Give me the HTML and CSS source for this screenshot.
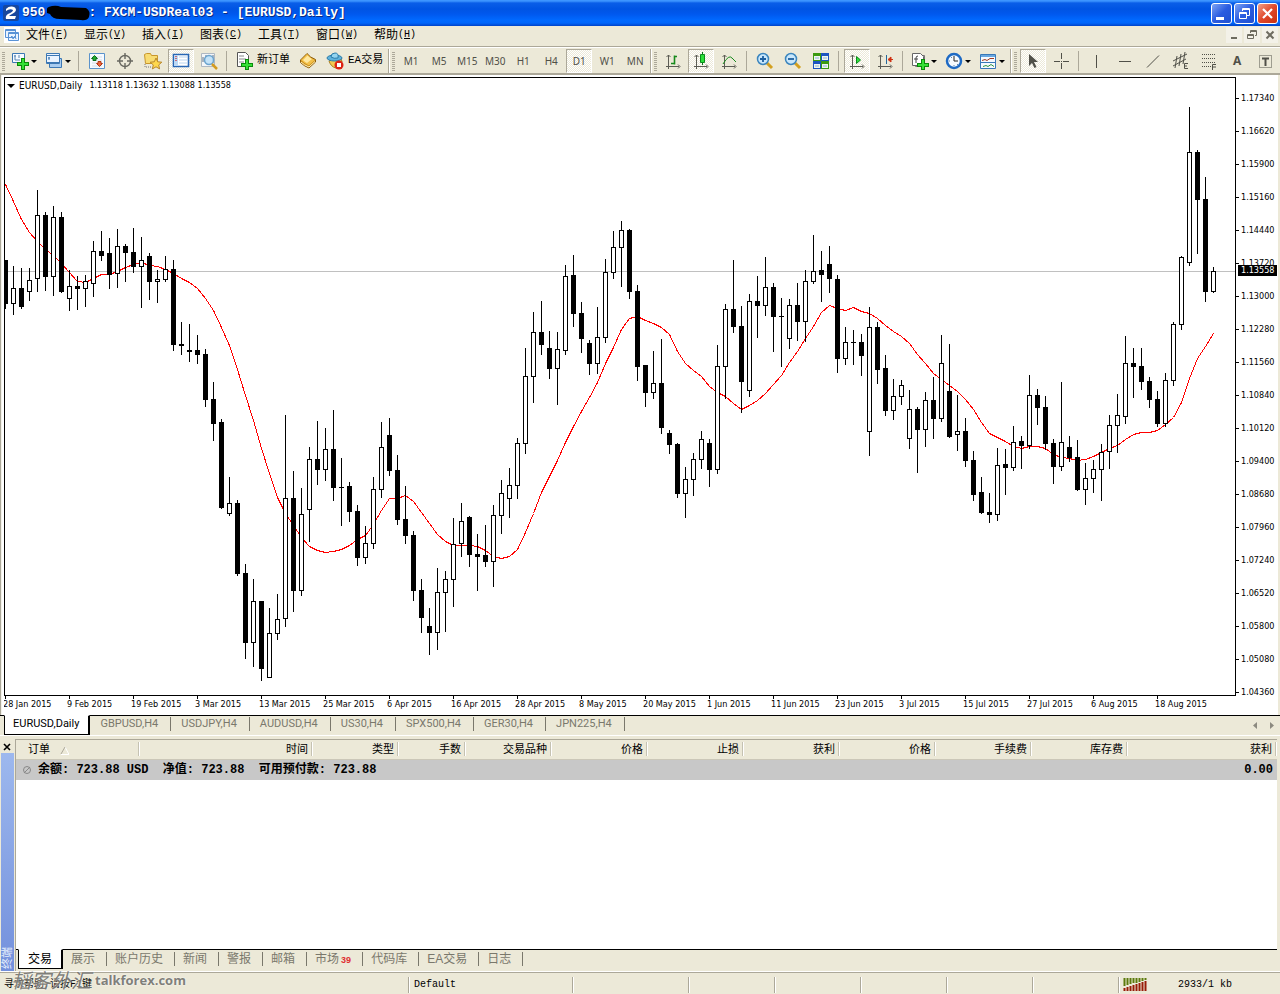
FILE: index.html
```html
<!DOCTYPE html>
<html lang="zh-CN">
<head>
<meta charset="utf-8">
<title>FXCM-USDReal03 - [EURUSD,Daily]</title>
<link rel="stylesheet" href="styles.css">
</head>
<body>
<header class="titlebar">
  <svg class="logo" width="16" height="16" viewBox="0 0 16 16"><rect width="16" height="16" rx="2" fill="#17479e"/><path d="M3 4Q7 0 12 2.500Q15 6 9 9Q7 10 6 11H13L12 14H3Q2 11 5 9Q10 7 10 5Q7 3 3 6Z" fill="#fff"/></svg>
  <h1 class="title">950<svg class="redact" width="46" height="16" viewBox="0 0 46 16"><path d="M2 5Q1 2 7 1Q12 0 16 2L41 3Q46 6 44 12Q42 16 36 15L15 14Q7 14 5 9L2 8Z"/></svg>: FXCM-USDReal03 - [EURUSD,Daily]</h1>
  <div class="win-buttons">
    <button class="win" aria-label="最小化"><svg width="19" height="19"><path d="M4 13h8v3h-8z" fill="#fff"/></svg></button>
    <button class="win" aria-label="还原"><svg width="19" height="19" fill="none" stroke="#fff"><path d="M7.500 7V4.500h7v7H12M7 5.500h8M4.500 8.500h7v6h-7zM4 9.500h8"/></svg></button>
    <button class="win win-close" aria-label="关闭"><svg width="19" height="19"><path d="M5 5l9 9M14 5l-9 9" stroke="#fff" stroke-width="2.200"/></svg></button>
  </div>
</header>

<nav class="menubar">
  <svg class="menu-icon" width="16" height="16" fill="none" stroke="#5a93d6"><rect width="16" height="16" fill="#fff" stroke="none"/><path d="M1.500 2.500h10v8h-10zM4.500 5.500h10v8h-10z" fill="#eaf4ff"/><path d="M1 3.500h11M4 6.500h11M6 11l2-2 1 3 2-3 1 3"/></svg>
  <button class="menu">文件<span>(<u>F</u>)</span></button>
  <button class="menu">显示<span>(<u>V</u>)</span></button>
  <button class="menu">插入<span>(<u>I</u>)</span></button>
  <button class="menu">图表<span>(<u>C</u>)</span></button>
  <button class="menu">工具<span>(<u>T</u>)</span></button>
  <button class="menu">窗口<span>(<u>W</u>)</span></button>
  <button class="menu">帮助<span>(<u>H</u>)</span></button>
  <div class="mdi-buttons">
    <button class="mdi" aria-label="最小化图表"><svg width="16" height="16"><path d="M5 10h6v2h-6z" fill="#6e6c60"/></svg></button>
    <button class="mdi" aria-label="还原图表"><svg width="16" height="16" fill="none" stroke="#6e6c60"><path d="M6.500 6V3.500h6v5H11M6 4.500h7M3.500 7.500h6v4h-6zM3 8.500h7"/></svg></button>
    <button class="mdi" aria-label="关闭图表"><svg width="16" height="16"><path d="M4.500 4.500l7 7M11.500 4.500l-7 7" stroke="#6e6c60" stroke-width="2"/></svg></button>
  </div>
</nav>

<div class="toolbar">
  <div class="group">
    <button class="tool menu-tool" aria-label="新图表"><svg width="18" height="18"><path d="M1.500 1.500h12v9h-12z" fill="#f5faff" stroke="#3c78b4"/><path d="M4 3v5M3 4h2M8 3v3M4 8h5" stroke="#5a87b4"/><path d="M10 6h4v4h4v4h-4v4h-4v-4H6v-4h4z" fill="#0b8a0b"/><path d="M11 7h2v4h4v2h-4v4h-2v-4H7v-2h4z" fill="#35e035"/></svg><i class="caret"></i></button>
    <button class="tool menu-tool" aria-label="配置文件"><svg width="18" height="18" stroke="#3c78b4"><path d="M4.500 6.500h12v9h-12z" fill="#a9cdf0"/><path d="M1.500 1.500h13v10h-13z" fill="#eaf4ff"/><path d="M1 3.500h13M1 10.500h13M4 5v3M3 6h2" fill="none"/></svg><i class="caret"></i></button>
    <i class="sep"></i>
    <button class="tool" aria-label="市场报价"><svg width="18" height="18"><path d="M1.500 1.500h15v15h-15z" fill="#f6faff" stroke="#5b93cb"/><path d="M4 5h10M4 8h10M4 11h10M4 14h10" stroke="#d5dde8"/><path d="M6.500 3.500l3 3H8v2H5v-2H3.500z" fill="#20a830" stroke="#0b701a"/><path d="M11.500 14.500l-3-3H10v-2h3v2h1.500z" fill="#f0663c" stroke="#b03a18"/></svg></button>
    <button class="tool" aria-label="数据窗口"><svg width="18" height="18" fill="none" stroke="#686860" stroke-width="1.400"><circle cx="9" cy="9" r="5.500"/><path d="M9 1v6M9 11v6M1 9h6M11 9h6"/></svg></button>
    <button class="tool" aria-label="导航"><svg width="20" height="18"><path d="M1.500 2.500l2-1h4l1 2h6v8h-12z" fill="#f8dc72" stroke="#c8962c"/><path d="M2 12v3h7" stroke="#777" fill="none" stroke-dasharray="1 1"/><path d="M13 6l1.700 3.800 4.100.4-3.100 2.700.9 4-3.600-2.100-3.600 2.100.9-4-3.100-2.700 4.100-.4z" fill="#ffd84c" stroke="#b8862c"/></svg></button>
    <button class="tool pressed" aria-label="终端"><svg width="18" height="18"><path d="M1.500 2.500h15v12h-15z" fill="#fff" stroke="#2867b5" stroke-width="1.600"/><path d="M2 3h4v11H2z" fill="#bcd9f5"/><path d="M4 4v1M4 6v1M4 8v1" stroke="#c00"/><path d="M7 5h8M7 8h8M7 11h8" stroke="#b9d4ef"/></svg></button>
    <button class="tool" aria-label="策略测试"><svg width="18" height="18"><path d="M1.500 1.500h13v13h-13z" fill="#f4f6f8" stroke="#aeb8c2"/><path d="M3 5v5M6 3v6M13 3v8" stroke="#607080"/><circle cx="9" cy="8" r="4.500" fill="#c4e3f8" stroke="#6da5cf" stroke-width="1.500"/><path d="M12 12l5 5" stroke="#d39b20" stroke-width="2.500"/></svg></button>
    <i class="sep"></i>
    <button class="tool text-tool"><svg width="18" height="18"><path d="M2.500.5h8l3 3v11h-11z" fill="#fff" stroke="#555"/><path d="M4 4h5M4 7h7M4 10h5" stroke="#888"/><path d="M10 7h4v4h4v4h-4v3h-4v-3H6v-4h4z" fill="#0b8a0b"/><path d="M11 8h2v4h4v2h-4v3h-2v-3H7v-2h4z" fill="#35e035"/></svg><span>新订单</span></button>
    <button class="tool" aria-label="MetaEditor"><svg width="18" height="18"><path d="M1.500 8l6.500-6.500q3 4 8.500 6v2.500L10 16q-5-2-8.500-5.500z" fill="#c98a14" stroke="#8d5e0e"/><path d="M2 8l6-6q3 4 8 6l-6 5.500q-5-2-8-5.500z" fill="#f2c04a"/><path d="M4 8l4.500-4.500q2 2 4.500 3.500l-5 4q-2-1-4-3z" fill="#ffe9a0"/><path d="M2 10q3 3 8 5l6-5.500" stroke="#fff3be" fill="none"/></svg></button>
    <button class="tool text-tool"><svg width="18" height="18"><path d="M3 9l4-3h8l1 4-6 6q-5-1-7-7z" fill="#f3ca50" stroke="#a97f20"/><ellipse cx="8.500" cy="6" rx="7.500" ry="3" fill="#5fb2dc" stroke="#2b7ca9"/><path d="M5 5q0-4 4-4t3 5q-4 1-7-1z" fill="#93d4f0" stroke="#2b7ca9"/><circle cx="13" cy="13" r="4.500" fill="#dc2414"/><path d="M11 11h4v4h-4z" fill="#fff"/></svg><span>EA交易</span></button>
  </div>
  <div class="group">
    <button class="tool">M1</button><button class="tool">M5</button><button class="tool">M15</button><button class="tool">M30</button><button class="tool">H1</button><button class="tool">H4</button><button class="tool pressed">D1</button><button class="tool">W1</button><button class="tool">MN</button>
  </div>
  <div class="group">
    <button class="tool" aria-label="柱状图"><svg width="18" height="18" fill="none" stroke="#5c5c54"><path d="M4.500 3v14M2 14.500h13M2.500 5l2-2 2 2M14 12.500l2 2-2 2"/><path d="M10.500 12.500v-9M10 4.500h3M7 11.500h3" stroke="#178a1c" stroke-width="1.600"/></svg></button>
    <button class="tool pressed" aria-label="阴阳烛"><svg width="18" height="18" fill="none" stroke="#5c5c54"><path d="M4.500 3v14M2 14.500h13M2.500 5l2-2 2 2M14 12.500l2 2-2 2"/><path d="M10.500 0v13" stroke="#0b701a"/><path d="M8.500 2.500h4v8h-4z" fill="#2be03a" stroke="#0b8a1a"/></svg></button>
    <button class="tool" aria-label="折线图"><svg width="18" height="18" fill="none" stroke="#5c5c54"><path d="M4.500 3v14M2 14.500h13M2.500 5l2-2 2 2M14 12.500l2 2-2 2"/><path d="M3 12q6-10 9-6l4 4" stroke="#178a1c"/></svg></button>
    <i class="sep"></i>
    <button class="tool" aria-label="放大"><svg width="18" height="18"><path d="M11 11l5 5" stroke="#d3a020" stroke-width="3"/><circle cx="7" cy="7" r="5.500" fill="#c9e7fb" stroke="#3b85bd" stroke-width="1.500"/><path d="M4 7h6M7 4v6" stroke="#1c5fa0" stroke-width="1.800"/></svg></button>
    <button class="tool" aria-label="缩小"><svg width="18" height="18"><path d="M11 11l5 5" stroke="#d3a020" stroke-width="3"/><circle cx="7" cy="7" r="5.500" fill="#c9e7fb" stroke="#3b85bd" stroke-width="1.500"/><path d="M4 7h6" stroke="#1c5fa0" stroke-width="1.800"/></svg></button>
    <button class="tool" aria-label="平铺"><svg width="18" height="18"><path d="M1 1h8v8H1zM9 9h8v8H9z" fill="#3c9a10"/><path d="M9 1h8v8H9zM1 9h8v8H1z" fill="#1c54c0"/><path d="M2 4h6v4H2zM10 4h6v4h-6zM2 12h6v4H2zM10 12h6v4h-6z" fill="#eef5ee"/><path d="M3 6h4M11 6h4M3 14h4M11 14h4" stroke="#8eb2d8"/></svg></button>
    <i class="sep"></i>
    <button class="tool pressed" aria-label="自动滚动"><svg width="18" height="18" fill="none" stroke="#5c5c54"><path d="M4.500 3v14M2 14.500h13M2.500 5l2-2 2 2M14 12.500l2 2-2 2"/><path d="M8.500 4.500v7l4-3.500z" fill="#2be03a" stroke="#0b8a1a"/></svg></button>
    <button class="tool" aria-label="图表平移"><svg width="18" height="18" fill="none" stroke="#5c5c54"><path d="M4.500 3v14M2 14.500h13M2.500 5l2-2 2 2M14 12.500l2 2-2 2"/><path d="M10.500 3v9" stroke="#24689c"/><path d="M17 7.500h-4M15 5l-3 2.500 3 2.500z" fill="#d03010" stroke="#d03010"/></svg></button>
    <i class="sep"></i>
    <button class="tool menu-tool" aria-label="指标"><svg width="18" height="18"><path d="M4.500 3.500h9v11h-9z" fill="#ddd" stroke="#777"/><path d="M1.500 1.500h8l3 3v9h-11z" fill="#fff" stroke="#666"/><path d="M7 4q-2 0-2 2v5M3 7h4" stroke="#444" fill="none"/><path d="M10 7h4v4h4v4h-4v3h-4v-3H6v-4h4z" fill="#0b8a0b"/><path d="M11 8h2v4h4v2h-4v3h-2v-3H7v-2h4z" fill="#35e035"/></svg><i class="caret"></i></button>
    <button class="tool menu-tool" aria-label="周期"><svg width="18" height="18"><circle cx="9" cy="9" r="7" fill="#f5faff" stroke="#1e6ac4" stroke-width="2.500"/><path d="M9 4v5h4" fill="none" stroke="#222"/><path d="M4 9h1M9 13v1M6 5l1 1M12 12l1 1" stroke="#68a"/></svg><i class="caret"></i></button>
    <button class="tool menu-tool" aria-label="模板"><svg width="18" height="18"><path d="M1.500 2.500h15v14h-15z" fill="#f6faff" stroke="#3878b8"/><path d="M2 3h14v2H2z" fill="#68a7e0"/><path d="M2 10.500h14" stroke="#3878b8"/><path d="M3 8.500l3-1 2 1 3-2 4 0" stroke="#a03820" fill="none"/><path d="M4 14.500l3-1 2 1 3-2 3 2" stroke="#2c9440" fill="none"/></svg><i class="caret"></i></button>
  </div>
  <div class="group">
    <button class="tool pressed" aria-label="光标"><svg width="18" height="18"><path d="M5 2v12l3-3 2.500 5 2-1-2.500-5h4z" fill="#505048"/></svg></button>
    <button class="tool" aria-label="十字光标"><svg width="18" height="18" stroke="#505048"><path d="M9.500 1v6M9.500 11v6M2 9.500h6M11 9.500h6M9 9.500h1"/></svg></button>
    <i class="sep"></i>
    <button class="tool" aria-label="垂直线"><svg width="18" height="18" stroke="#505048"><path d="M8.500 3v13"/></svg></button>
    <button class="tool" aria-label="水平线"><svg width="18" height="18" stroke="#505048"><path d="M3 9.500h12"/></svg></button>
    <button class="tool" aria-label="趋势线"><svg width="18" height="18" stroke="#505048"><path d="M3 15.500L15 3.500"/></svg></button>
    <button class="tool" aria-label="等距通道"><svg width="18" height="18" stroke="#505048"><path d="M1 9L15 2M1 14L14 7M5 4L3 16M9 2L7 14M13 0L11 12"/><path d="M16 11.500h-3.500v5H16M12 14h3" fill="none"/></svg></button>
    <button class="tool" aria-label="斐波纳契"><svg width="18" height="18" stroke="#505048"><path d="M2 2.500h14M2 6.500h14M2 10.500h14M2 14.500h9" stroke-dasharray="1 1"/><path d="M16 12.500h-3.500V18M13 15h3" fill="none"/></svg></button>
    <button class="tool glyph" aria-label="文字">A</button>
    <button class="tool" aria-label="文字标签"><svg width="18" height="18" fill="none" stroke="#505048"><path d="M3.500 3.500h12v12h-12z" stroke-dasharray="1 1"/><path d="M6 6.500h7M9.500 6v8" stroke-width="2"/></svg></button>
  </div>
</div>

<main class="chart">
  <div class="plot">
    <p class="ohlc"><i class="caret"></i><b>EURUSD,Daily</b><span>1.13118 1.13632 1.13088 1.13558</span></p>
    <svg class="candles" id="candles" role="img" aria-label="EURUSD Daily"></svg>
  </div>
  <div class="price-axis">
    <ol class="prices">
      <li>1.17340</li><li>1.16620</li><li>1.15900</li><li>1.15160</li><li>1.14440</li><li>1.13720</li><li>1.13000</li><li>1.12280</li><li>1.11560</li><li>1.10840</li><li>1.10120</li><li>1.09400</li><li>1.08680</li><li>1.07960</li><li>1.07240</li><li>1.06520</li><li>1.05800</li><li>1.05080</li><li>1.04360</li>
    </ol>
    <span class="last-price">1.13558</span>
  </div>
  <ol class="dates">
    <li>28 Jan 2015</li><li>9 Feb 2015</li><li>19 Feb 2015</li><li>3 Mar 2015</li><li>13 Mar 2015</li><li>25 Mar 2015</li><li>6 Apr 2015</li><li>16 Apr 2015</li><li>28 Apr 2015</li><li>8 May 2015</li><li>20 May 2015</li><li>1 Jun 2015</li><li>11 Jun 2015</li><li>23 Jun 2015</li><li>3 Jul 2015</li><li>15 Jul 2015</li><li>27 Jul 2015</li><li>6 Aug 2015</li><li>18 Aug 2015</li>
  </ol>
</main>

<nav class="sheets">
  <button class="sheet current">EURUSD,Daily</button><button class="sheet">GBPUSD,H4</button><button class="sheet">USDJPY,H4</button><button class="sheet">AUDUSD,H4</button><button class="sheet">US30,H4</button><button class="sheet">SPX500,H4</button><button class="sheet">GER30,H4</button><button class="sheet">JPN225,H4</button>
  <svg class="sheet-arrows" width="26" height="10" fill="#8c8a80"><path d="M6 1v7L2 4.500zM19 1v7l4-3.500z"/></svg>
</nav>

<section class="terminal">
  <aside class="rail">
    <button class="rail-close" aria-label="关闭终端"><svg width="8" height="8"><path d="M1 1l6 6M7 1l-6 6" stroke="#000" stroke-width="1.600"/></svg></button>
    <div class="rail-name"><span>终端</span></div>
  </aside>
  <div class="terminal-body">
    <div class="orders-wrap">
      <table class="orders">
        <colgroup><col class="c-order"><col class="c-time"><col class="c-type"><col class="c-lots"><col class="c-type"><col class="c-num"><col class="c-num"><col class="c-num"><col class="c-num"><col class="c-num"><col class="c-num"><col></colgroup>
        <thead><tr><th>订单 <svg width="9" height="9"><path d="M1 8.500h8L5 1" fill="none" stroke="#fff"/><path d="M1 8L5 1" stroke="#aca899"/></svg></th><th>时间</th><th>类型</th><th>手数</th><th>交易品种</th><th>价格</th><th>止损</th><th>获利</th><th>价格</th><th>手续费</th><th>库存费</th><th>获利</th></tr></thead>
        <tbody><tr><td colspan="11"><svg width="10" height="10" fill="none" stroke="#888"><circle cx="5" cy="5" r="3.500"/><path d="M2 8l6-6"/></svg>余额: 723.88 USD&nbsp; 净值: 723.88&nbsp; 可用预付款: 723.88</td><td>0.00</td></tr></tbody>
      </table>
    </div>
    <nav class="tabs">
      <button class="tab current">交易</button><button class="tab">展示</button><button class="tab">账户历史</button><button class="tab">新闻</button><button class="tab">警报</button><button class="tab">邮箱</button><button class="tab">市场<b class="count">39</b></button><button class="tab">代码库</button><button class="tab">EA交易</button><button class="tab">日志</button>
    </nav>
  </div>
</section>

<footer class="status">
  <span class="cell help">寻求帮助,请按F1键</span>
  <span class="cell profile">Default</span>
  <span class="cell wide"></span><span class="cell"></span><span class="cell"></span><span class="cell"></span><span class="cell"></span><span class="cell"></span>
  <span class="cell traffic"><svg width="24" height="13"><path d="M1.500 0v8M4.500 0v7M7.500 0v6M10.500 0v5M13.500 0v5M16.500 0v4M19.500 0v3M22.500 0v2" stroke="#5c7a0c" stroke-width="2"/><path d="M1.500 10v3M4.500 9v4M7.500 8v5M10.500 7v6M13.500 6v7M16.500 5v8M19.500 4v9M22.500 3v10" stroke="#981c08" stroke-width="2"/></svg>2933/1 kb</span>
  <div class="watermark"><span>韬客外汇</span>talkforex.com</div>
</footer>
<script src="chart.js"></script>
</body>
</html>
```

FILE: styles.css
```css
* { box-sizing: border-box; }
body {
  margin: 0;
  min-height: 100vh;
  display: flex;
  flex-direction: column;
  background: #ece9d8;
  color: #000;
  font: 12px/14px "Liberation Sans", "Noto Sans CJK SC", sans-serif;
  overflow-x: hidden;
}
button { margin: 0; padding: 0; border: 0; background: none; font: inherit; color: inherit; }
ol { margin: 0; padding: 0; list-style: none; }
svg { display: block; flex: none; }

.titlebar {
  display: flex;
  align-items: center;
  height: 26px;
  padding: 0 2px 0 3px;
  background: linear-gradient(#3d95ff 0, #3d95ff 1px, #0a5ee8 3px, #0054e3 9px, #0058ee 14px, #0069ff 20px, #0066fb 23px, #0042c8 26px);
}
.title {
  display: flex;
  align-items: center;
  flex: 1;
  margin: 0 0 0 3px;
  font: bold 13px/16px "Liberation Mono", monospace;
  color: #fff;
  text-shadow: 1px 1px #0a2a80;
  white-space: pre;
}
.redact { margin-right: -3px; }
.win-buttons { display: flex; gap: 2px; }
.win {
  width: 21px;
  height: 21px;
  padding: 0;
  border: 1px solid #fff;
  border-radius: 3px;
  background: linear-gradient(135deg, #7ea4f4, #2a5ce0 50%, #2050d0);
}
.win-close { background: linear-gradient(135deg, #f0a088, #e0482a 50%, #c83010); }

.menubar {
  display: flex;
  align-items: center;
  height: 20px;
  padding: 0 2px 2px 4px;
}
.menu-icon { margin-right: 6px; }
.menu {
  width: 58px;
  display: flex;
  align-items: center;
  font-size: 12px;
}
.menu span { font: 10px/12px "Liberation Mono", monospace; }
.mdi-buttons { display: flex; gap: 2px; margin-left: auto; }
.mdi { width: 16px; height: 16px; background: #f3f1e8; }

.toolbar {
  display: flex;
  height: 29px;
  padding-top: 2px;
  border-top: 1px solid #aca899;
  border-bottom: 2px solid #aca899;
  box-shadow: inset 0 1px #fff;
}
.group {
  display: flex;
  align-items: center;
  border-right: 1px solid #aca899;
  margin-right: 1px;
  padding-right: 1px;
  box-shadow: 1px 0 #fff;
}
.group:last-child { flex: 1; border: 0; box-shadow: none; margin: 0; padding: 0; }
.group::before {
  content: "";
  flex: none;
  width: 3px;
  height: 19px;
  margin: 0 2px;
  background: repeating-linear-gradient(#aca899 0, #aca899 1px, transparent 1px, transparent 2px);
}
.sep { flex: none; width: 1px; height: 20px; margin: 0 4px 0 3px; background: #aca899; }
.tool {
  flex: none;
  display: flex;
  align-items: center;
  justify-content: center;
  width: 28px;
  height: 24px;
  font: 10px/12px "Noto Sans", sans-serif;
  color: #505048;
}
.pressed {
  width: 26px;
  margin: 0 1px;
  border: 1px solid;
  border-color: #aca899 #fff #fff #aca899;
  background: repeating-conic-gradient(#fff 0 25%, #ece9d8 0 50%) 0 0 / 2px 2px;
}
.menu-tool { width: 34px; gap: 2px; }
.text-tool {
  width: auto;
  padding: 0 4px;
  gap: 4px;
  font: 11px/14px "Liberation Mono", "Noto Sans CJK SC", monospace;
  color: #000;
}
.text-tool span { padding-bottom: 2px; }
.glyph { font: bold 12px/14px "Noto Sans", sans-serif; }
.caret {
  flex: none;
  border: 3px solid transparent;
  border-top-color: #000;
  border-bottom-width: 0;
}

.chart {
  display: grid;
  grid-template-columns: 1fr 42px;
  margin-right: 2px;
  padding: 2px 0 0 4px;
  background: #fff;
  box-shadow: inset 1px 0 #aca899, inset 2px 0 #f4f2ea;
  font: 9px/11px "DejaVu Sans Condensed", "DejaVu Sans", sans-serif;
}
.plot { position: relative; border: 1px solid #000; }
.candles { width: 100%; height: 617px; }
.ohlc {
  position: absolute;
  top: 2px;
  left: 2px;
  display: flex;
  align-items: center;
  gap: 4px;
  margin: 0;
}
.ohlc b { font-size: 10px; font-weight: normal; margin-right: 3px; }
.ohlc .caret { border-width: 4px 4px 0; }
.price-axis { position: relative; padding-top: 5px; height: 619px; }
.prices li { height: 33px; display: flex; align-items: center; gap: 2px; }
.prices li::before { content: ""; width: 3px; height: 1px; background: #000; }
.last-price {
  position: absolute;
  left: 2px;
  right: 1px;
  top: 188px;
  padding-left: 3px;
  background: #000;
  color: #fff;
}
.dates { grid-column: 1 / -1; display: flex; height: 19px; overflow: hidden; }
.dates li { flex: none; width: 64px; white-space: nowrap; padding-top: 3px; margin-left: -1px; margin-right: 1px; }
.dates li::before { content: ""; display: block; width: 1px; height: 3px; margin: -3px 0 0 2px; background: #000; }

.sheets {
  display: flex;
  align-items: flex-start;
  height: 21px;
  padding-left: 4px;
  border-top: 1px solid #000;
  border-bottom: 1px solid #fff;
  font: 11px/14px Roboto, sans-serif;
  color: #7a786c;
}
.sheet { margin-top: 1px; padding: 0 12px 0 10px; border-right: 1px solid #7a786c; }
.sheet.current {
  margin: -1px 0 0;
  padding: 1px 9px 3px 8px;
  border: 1px solid #000;
  border-top-color: #fff;
  border-right-width: 2px;
  background: #fff;
  color: #000;
}
.sheet-arrows { margin: 5px 3px 0 auto; }

.terminal { flex: 1; display: flex; padding-top: 3px; }
.rail { width: 15px; display: flex; flex-direction: column; padding: 2px 1px 0 1px; }
.rail-close { height: 12px; padding-left: 2px; }
.rail-name {
  flex: 1;
  display: flex;
  align-items: flex-end;
  justify-content: center;
  padding-bottom: 2px;
  background: linear-gradient(#9db8ee, #7390dc);
  color: #e6eefc;
}
.rail-name span { writing-mode: sideways-lr; font-size: 11px; line-height: 13px; }
.terminal-body {
  flex: 1;
  display: flex;
  flex-direction: column;
  border-top: 1px solid #aca899;
  border-left: 1px solid #aca899;
  margin-right: 3px;
}
.orders-wrap { flex: 1; background: #fff; border-bottom: 1px solid #000; }
.orders { width: 100%; table-layout: fixed; border-collapse: collapse; }
.orders th {
  height: 19px;
  padding: 0 5px 2px 0;
  background: linear-gradient(90deg, transparent calc(100% - 2px), #c5c2b2 0, #c5c2b2 calc(100% - 1px), #fff 0) center / 100% 14px no-repeat, #ece9d8;
  border-bottom: 1px solid #cbc7b8;
  font: 11px/14px "Noto Sans CJK SC", sans-serif;
  text-align: right;
}
.orders th:first-child { text-align: left; padding-left: 12px; }
.orders th svg { display: inline-block; margin-left: 8px; vertical-align: -2px; }
.orders td {
  height: 21px;
  padding: 0 4px 0 6px;
  background: #c8c8c8;
  font: bold 12px/14px "Liberation Mono", "Noto Sans CJK SC", monospace;
  white-space: nowrap;
}
.orders td svg { display: inline-block; margin-right: 6px; vertical-align: -2px; }
.orders td:last-child { text-align: right; }
.c-order { width: 124px; }
.c-time { width: 173px; }
.c-type { width: 86px; }
.c-lots { width: 67px; }
.c-num { width: 96px; }

.tabs { display: flex; align-items: flex-start; height: 21px; padding-left: 2px; color: #7a786c; }
.tab { margin-top: 2px; padding: 0 11px 0 8px; border-right: 1px solid #7a786c; display: flex; }
.tab.current {
  margin-top: -1px;
  padding: 2px 9px 2px 9px;
  border: 1px solid #000;
  border-top-color: #fff;
  border-right-width: 2px;
  background: #fff;
  color: #000;
}
.count { margin-left: 2px; padding-top: 3px; font: bold 9px/11px "Liberation Sans", sans-serif; color: #e03030; }

.status {
  position: relative;
  display: flex;
  align-items: center;
  height: 23px;
  padding: 3px 0 0 0;
  border-top: 1px solid #fff;
  box-shadow: inset 0 1px #aca899;
  font: 10px/16px "Liberation Mono", "Noto Sans CJK SC", monospace;
}
.cell { width: 86px; height: 16px; padding-left: 4px; border-left: 1px solid #aca899; box-shadow: inset 1px 0 #fff; }
.help { width: 408px; border: 0; box-shadow: none; }
.profile { width: 164px; padding-left: 5px; }
.cell.wide { width: 116px; }
.traffic { flex: 1; display: flex; align-items: center; gap: 31px; }
.watermark {
  position: absolute;
  left: 11px;
  bottom: 5px;
  display: flex;
  align-items: center;
  font: bold 13px/18px "Open Sans", sans-serif;
  color: rgba(105, 105, 100, 0.85);
  text-shadow: 0 0 2px #fff;
}
.watermark span { width: 84px; font: italic 20px/18px "Noto Sans CJK SC", sans-serif; }
```

FILE: chart.js
```javascript
// One entry per day: high, body top, body bottom, low, 1 when the close is below the open.
const days = [
  [260,260,304,309,1],[266,288,304,315,0],[268,288,307,309,1],[268,280,292,301,0],[190,215,279,292,0],[212,215,277,291,1],[206,217,277,296,0],[212,217,292,293,1],
  [270,286,299,311,0],[276,286,289,310,1],[275,281,289,307,0],[241,251,284,297,0],[231,251,256,261,1],[238,253,275,289,1],[229,246,274,288,0],[244,246,253,282,1],
  [228,252,267,273,1],[237,260,267,308,0],[253,256,282,300,1],[270,279,282,303,0],[256,269,280,282,0],[260,269,345,351,1],[322,344,346,355,1],[324,350,352,362,1],
  [335,350,355,364,1],[349,354,400,407,1],[382,399,424,441,1],[419,422,508,509,1],[477,503,514,516,0],[500,503,574,576,1],[564,573,643,659,1],[579,601,643,667,0],
  [601,601,669,681,1],[608,633,678,678,0],[594,619,634,640,0],[415,498,619,627,0],[471,498,591,612,1],[488,514,591,596,0],[447,459,510,542,0],[421,459,470,485,1],
  [428,449,470,481,0],[410,449,488,501,1],[458,487,488,526,1],[482,486,512,522,1],[505,511,558,566,1],[526,543,558,564,0],[477,489,544,549,0],[422,447,490,498,0],
  [418,435,471,476,1],[455,470,520,525,1],[486,519,536,544,1],[531,535,591,601,1],[579,590,618,633,1],[608,626,633,655,1],[568,592,633,650,0],[571,579,593,632,0],
  [518,544,580,607,0],[503,521,544,557,0],[516,517,555,567,1],[534,554,557,591,1],[525,555,562,567,1],[505,515,562,587,0],[480,493,516,534,0],[468,485,499,518,0],
  [438,443,486,499,0],[348,376,444,454,0],[312,332,377,403,0],[301,332,345,355,1],[331,348,369,379,1],[332,349,369,405,0],[265,276,351,355,0],[255,275,314,327,1],
  [302,313,339,353,1],[340,343,364,375,1],[307,337,364,374,0],[259,272,338,343,0],[231,247,273,279,0],[221,230,248,287,0],[229,230,292,299,1],[285,291,367,381,1],
  [365,365,393,407,1],[351,383,393,399,0],[339,383,428,434,1],[430,433,445,454,1],[443,444,494,498,1],[467,479,494,518,0],[453,459,480,496,0],[431,439,460,469,0],
  [439,443,470,487,1],[345,366,470,474,0],[304,309,367,399,0],[260,309,327,333,1],[306,326,382,413,1],[294,301,391,397,0],[276,301,306,338,1],[257,287,306,316,0],
  [283,287,317,352,1],[298,316,317,367,1],[299,305,339,349,0],[283,305,322,341,1],[270,281,322,342,0],[235,271,282,284,0],[251,270,275,302,1],[246,264,279,293,1],
  [275,279,359,373,1],[327,342,359,365,0],[330,342,343,365,1],[334,342,356,376,1],[307,327,432,456,0],[322,327,370,384,1],[355,368,411,416,1],[379,396,411,420,0],
  [380,385,397,405,0],[390,409,439,449,0],[407,409,430,473,1],[392,400,430,447,0],[377,400,419,439,1],[335,363,419,422,0],[344,391,437,438,1],[395,431,435,451,0],
  [418,431,461,467,1],[451,460,495,501,1],[477,492,513,514,1],[493,512,515,523,1],[448,465,515,521,0],[449,464,468,495,1],[426,442,468,471,0],[436,441,446,469,1],
  [375,395,446,449,0],[389,395,408,425,1],[396,407,444,450,1],[439,443,467,484,1],[382,442,467,471,0],[436,447,458,462,1],[440,457,490,491,1],[463,478,490,505,0],
  [460,469,479,493,0],[444,452,470,501,0],[415,425,452,469,0],[394,415,426,453,0],[336,363,417,424,0],[348,363,367,398,1],[348,366,382,390,1],[377,381,400,408,1],
  [391,399,424,427,1],[373,380,424,427,0],[322,324,381,386,0],[256,257,325,330,0],[107,152,263,266,0],[150,152,200,254,1],[177,199,292,302,1],[267,271,292,293,0]
];

// Moving average, one value per day.
const average = [
  184,201,219,232,241,249,255,263,272,281,282,278,274,274,271,267,264,262,265,266,269,273,278,282,288,298,310,327,345,369,395,420,
  448,473,497,513,525,537,546,550,552,551,549,545,539,535,524,510,498,498,495,501,512,523,534,541,545,545,545,546,550,556,558,556,
  549,532,513,492,476,460,442,426,411,397,382,363,347,329,318,316,320,323,327,334,351,363,370,376,386,392,396,403,409,405,400,393,
  384,375,362,351,338,326,312,305,308,310,307,311,313,318,325,331,336,343,354,363,373,379,385,391,399,409,422,433,437,441,446,448,
  446,446,448,454,457,458,460,459,456,452,448,445,439,434,432,432,430,424,417,402,378,358,346,333
];

const STEP = 8;
const TOP = 78;
const LAST_PRICE = 271 - TOP;

const line = average.map((y, i) => `${i * STEP + 0.5},${y - TOP + 0.5}`).join(" ");
let shapes = `<path d="M0 ${LAST_PRICE + 0.5}H4000" stroke="#c0c0c0"/>`;
shapes += `<polyline points="${line}" fill="none" stroke="#f00" shape-rendering="crispEdges"/>`;

days.forEach(([high, top, bottom, low, down], i) => {
  const x = i * STEP;
  shapes += `<rect x="${x}" y="${high - TOP}" width="1" height="${low - high}"/>`;
  shapes += `<rect x="${x - 2}" y="${top - TOP}" width="5" height="${bottom - top}"/>`;
  if (!down) {
    shapes += `<rect x="${x - 1}" y="${top - TOP + 1}" width="3" height="${bottom - top - 2}" fill="#fff"/>`;
  }
});

document.getElementById("candles").innerHTML = shapes;
```
